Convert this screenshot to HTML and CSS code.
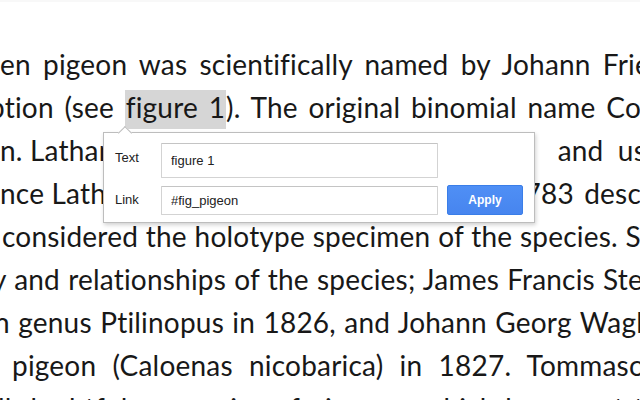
FILE: index.html
```html
<!DOCTYPE html>
<html>
<head>
<meta charset="utf-8">
<link rel="stylesheet" href="styles.css">
</head>
<body>
<div class="page">
  <div class="doc">
    <div class="line l1">en pigeon was scientifically named by Johann Frie</div>
    <div class="line l2">ption (see <span class="hl">figure 1</span>). The original binomial name Co</div>
    <div class="line split l3"><span>n. Latham</span><span class="wide">and us</span></div>
    <div class="line split l4"><span>nce Latham</span><span class="mid">1783 desc</span></div>
    <div class="line l5">considered the holotype specimen of the species. S</div>
    <div class="line l6">y and relationships of the species; James Francis Ste</div>
    <div class="line l7">n genus Ptilinopus in 1826, and Johann Georg Wagl</div>
    <div class="line l8">pigeon (Caloenas nicobarica) in 1827. Tommaso</div>
    <div class="line l9">ll doubtful as species of pigeons, which he meant to</div>
  </div>

  <div class="popup">
    <label class="lbl">Text</label>
    <input class="field tall" type="text" value="figure 1">
    <span></span>
    <label class="lbl">Link</label>
    <input class="field" type="text" value="#fig_pigeon">
    <button class="apply">Apply</button>
  </div>
</div>
</body>
</html>
```

FILE: styles.css
```css
html, body {
  margin: 0;
  padding: 0;
  background: #ffffff;
}

.page {
  position: relative;
  width: 640px;
  height: 400px;
  overflow: hidden;
  border-top: 2px solid #f8f8f8;
  box-sizing: border-box;
}

.doc {
  padding-top: 41px;
  font-family: Lato, "Open Sans", sans-serif;
  font-size: 28px;
  letter-spacing: 0.2px;
  line-height: 43px;
  color: #181818;
}

.line {
  height: 43px;
  text-align: justify;
  text-align-last: justify;
  white-space: nowrap;
  overflow: visible;
}

.split {
  display: flex;
  justify-content: space-between;
}

.wide { word-spacing: 7px; }
.mid { word-spacing: 3px; }

.l1 { margin-left: 0; width: 650px; }
.l2 { margin-left: -11px; width: 652px; }
.l3 { margin-left: 0; width: 646px; }
.l4 { margin-left: 0; width: 641px; }
.l5 { margin-left: 2px; width: 639px; }
.l6 { margin-left: -8px; width: 651px; }
.l7 { margin-left: -6px; width: 649px; }
.l8 { margin-left: 12px; width: 633px; }
.l9 { margin-left: -2px; width: 662px; }

.hl {
  background: #d6d6d6;
  padding: 0 1px 5px;
}

.popup {
  position: absolute;
  left: 103px;
  top: 130px;
  width: 432px;
  box-sizing: border-box;
  padding: 10px 11px 7px 10px;
  background: #ffffff;
  border: 1px solid #bdbdbd;
  box-shadow: 1px 2px 4px rgba(0, 0, 0, 0.18);
  display: grid;
  grid-template-columns: 38px 277px 76px;
  column-gap: 9px;
  row-gap: 7px;
  align-items: center;
  font-family: "Liberation Sans", Arial, sans-serif;
}

.popup::before {
  content: "";
  position: absolute;
  top: -5px;
  left: 16px;
  width: 9px;
  height: 9px;
  background: #ffffff;
  border-left: 1px solid #bdbdbd;
  border-top: 1px solid #bdbdbd;
  transform: rotate(45deg);
}

.lbl {
  font-size: 13px;
  color: #222222;
  padding-left: 1px;
  align-self: start;
  padding-top: 7px;
}

.field {
  box-sizing: border-box;
  width: 277px;
  height: 29px;
  margin: 0;
  padding: 0 9px;
  border: 1px solid #d3d3d3;
  border-top-color: #c4c4c4;
  border-radius: 1px;
  font-family: "Liberation Sans", Arial, sans-serif;
  font-size: 13px;
  color: #222222;
  background: #ffffff;
  outline: none;
}

.field.tall {
  height: 35px;
}

.apply {
  box-sizing: border-box;
  width: 76px;
  height: 30px;
  margin: 0;
  padding: 0;
  border: 1px solid #3a7ee8;
  border-radius: 2px;
  background: linear-gradient(#4f8ff5, #4785ef);
  color: #ffffff;
  font-family: "Liberation Sans", Arial, sans-serif;
  font-weight: bold;
  font-size: 12px;
}
```
